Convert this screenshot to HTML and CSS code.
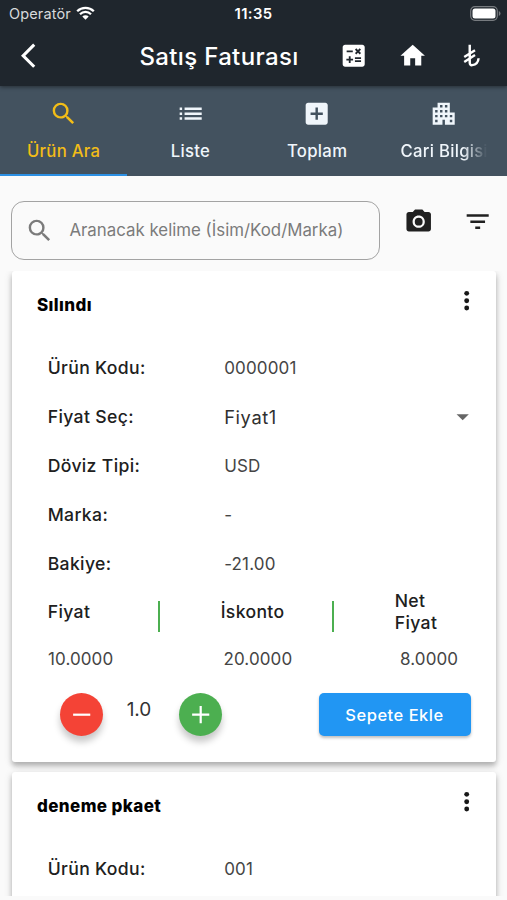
FILE: index.html
```
<!DOCTYPE html>
<html lang="tr">
<head>
<meta charset="utf-8">
<title>Satış Faturası</title>
<link rel="stylesheet" href="styles.css">
</head>
<body>
<header class="top">
  <div class="status">
    <div class="carrier"><span>Operatör</span>
      <svg class="wifi" viewBox="0 0 19 14"><path d="M1.2 5.2a11.8 11.8 0 0 1 16.6 0M4 8.2a7.8 7.8 0 0 1 11 0" fill="none" stroke="#fff" stroke-width="2.3"/><path d="M9.500 13.700 6.300 10.500a4.600 4.600 0 0 1 6.400 0z" fill="#fff"/></svg>
    </div>
    <span class="clock">11:35</span>
    <svg class="battery" viewBox="0 0 31 15"><rect x=".7" y=".7" width="26.600" height="13.600" rx="4.200" fill="none" stroke="#777b7f" stroke-width="1.200"/><rect x="2.500" y="2.500" width="23" height="10" rx="2.500" fill="#fff"/><path d="M28.800 5q1.700.7 1.700 2.500t-1.700 2.500z" fill="#777b7f"/></svg>
  </div>
  <div class="appbar">
    <svg class="icon back" viewBox="0 0 24 24"><path d="M11.670 3.870 9.900 2.100 0 12l9.900 9.900 1.770-1.770L3.540 12z"/></svg>
    <h1>Satış Faturası</h1>
    <svg class="icon" viewBox="0 0 24 24"><path d="M19 3H5c-1.100 0-2 .9-2 2v14c0 1.100.9 2 2 2h14c1.100 0 2-.9 2-2V5c0-1.100-.9-2-2-2zm-5.970 4.060L14.090 6l1.410 1.410L16.910 6l1.060 1.060-1.410 1.410 1.410 1.410-1.060 1.060-1.410-1.400-1.410 1.410-1.060-1.060 1.410-1.410-1.410-1.420zm-6.780.66h5v1.500h-5v-1.500zM11.500 16h-2v2H8v-2H6v-1.500h2v-2h1.500v2h2V16zm6.500 1.250h-5v-1.500h5v1.500zm0-2.500h-5v-1.500h5v1.500z"/></svg>
    <svg class="icon" viewBox="0 0 24 24"><path d="M10 20v-6h4v6h5v-8h3L12 3 2 12h3v8z"/></svg>
    <svg class="icon" viewBox="0 0 24 24"><path d="M10.400 3v14.500c0 1.800.8 2.400 2 2.200 3.200-.4 5-2.600 5.200-5.600M5.900 13.100l8.800-5.600M5.900 17.100l8.800-5.600" fill="none" stroke="#fff" stroke-width="2"/></svg>
  </div>
</header>
<nav class="tabs">
  <div class="tab active"><svg class="icon" viewBox="0 0 24 24"><path d="M15.500 14h-.79l-.28-.27A6.471 6.471 0 0 0 16 9.500 6.500 6.500 0 1 0 9.500 16c1.610 0 3.090-.59 4.230-1.570l.27.28v.79l5 4.990L20.490 19l-4.990-5zm-6 0C7.010 14 5 11.990 5 9.500S7.010 5 9.500 5 14 7.010 14 9.500 11.990 14 9.500 14z"/></svg><span>Ürün Ara</span></div>
  <div class="tab"><svg class="icon" viewBox="0 0 24 24"><path d="M3 13h2v-2H3v2zm0 4h2v-2H3v2zm0-8h2V7H3v2zm4 4h14v-2H7v2zm0 4h14v-2H7v2zM7 7v2h14V7H7z"/></svg><span>Liste</span></div>
  <div class="tab"><svg class="icon" viewBox="0 0 24 24"><path d="M19 3H5c-1.110 0-2 .9-2 2v14c0 1.100.89 2 2 2h14c1.100 0 2-.9 2-2V5c0-1.100-.9-2-2-2zm-2 10h-4v4h-2v-4H7v-2h4V7h2v4h4v2z"/></svg><span>Toplam</span></div>
  <div class="tab"><svg class="icon" viewBox="0 0 24 24"><path d="M17 11V3H7v4H3v14h8v-4h2v4h8V11h-4zM7 19H5v-2h2v2zm0-4H5v-2h2v2zm0-4H5V9h2v2zm4 4H9v-2h2v2zm0-4H9V9h2v2zm0-4H9V5h2v2zm4 8h-2v-2h2v2zm0-4h-2V9h2v2zm0-4h-2V5h2v2zm4 12h-2v-2h2v2zm0-4h-2v-2h2v2z"/></svg><span class="fade">Cari Bilgisi</span></div>
</nav>
<section class="search">
  <div class="field">
    <svg class="icon" viewBox="0 0 24 24"><path d="M15.500 14h-.79l-.28-.27A6.471 6.471 0 0 0 16 9.500 6.500 6.500 0 1 0 9.500 16c1.610 0 3.090-.59 4.230-1.570l.27.28v.79l5 4.990L20.490 19l-4.990-5zm-6 0C7.010 14 5 11.990 5 9.500S7.010 5 9.500 5 14 7.010 14 9.500 11.990 14 9.500 14z"/></svg>
    <span>Aranacak kelime (İsim/Kod/Marka)</span>
  </div>
  <svg class="icon camera" viewBox="0 0 24 24"><circle cx="12" cy="12" r="3.200"/><path d="M9 2 7.170 4H4c-1.100 0-2 .9-2 2v12c0 1.100.9 2 2 2h16c1.100 0 2-.9 2-2V6c0-1.100-.9-2-2-2h-3.170L15 2H9zm3 15c-2.760 0-5-2.240-5-5s2.240-5 5-5 5 2.240 5 5-2.240 5-5 5z"/></svg>
  <svg class="icon filter" viewBox="0 0 24 24"><path d="M10 18h4v-2h-4v2zM3 6v2h18V6H3zm3 7h12v-2H6v2z"/></svg>
</section>
<main class="list">
  <article class="card">
    <div class="head"><h2>Sılındı</h2><svg class="icon" viewBox="0 0 24 24"><circle cx="12" cy="6" r="2"/><circle cx="12" cy="12" r="2"/><circle cx="12" cy="18" r="2"/></svg></div>
    <dl class="rows">
      <div class="row"><dt>Ürün Kodu:</dt><dd>0000001</dd></div>
      <div class="row select"><dt>Fiyat Seç:</dt><dd>Fiyat1</dd><svg class="icon" viewBox="0 0 24 24"><path d="m7 10 5 5 5-5z"/></svg></div>
      <div class="row"><dt>Döviz Tipi:</dt><dd>USD</dd></div>
      <div class="row"><dt>Marka:</dt><dd>-</dd></div>
      <div class="row"><dt>Bakiye:</dt><dd>-21.00</dd></div>
    </dl>
    <div class="prices">
      <span class="label">Fiyat</span><i class="bar"></i><span class="label">İskonto</span><i class="bar"></i><span class="label net">Net<br>Fiyat</span>
    </div>
    <div class="amounts"><span>10.0000</span><span>20.0000</span><span>8.0000</span></div>
    <div class="actions">
      <button class="round minus"><svg viewBox="0 0 24 24"><path d="M5 12h14"/></svg></button>
      <span class="qty">1.0</span>
      <button class="round plus"><svg viewBox="0 0 24 24"><path d="M5 12h14M12 5v14"/></svg></button>
      <button class="add">Sepete Ekle</button>
    </div>
  </article>
  <article class="card">
    <div class="head"><h2>deneme pkaet</h2><svg class="icon" viewBox="0 0 24 24"><circle cx="12" cy="6" r="2"/><circle cx="12" cy="12" r="2"/><circle cx="12" cy="18" r="2"/></svg></div>
    <dl class="rows"><div class="row"><dt>Ürün Kodu:</dt><dd>001</dd></div></dl>
  </article>
</main>
</body>
</html>
```
FILE: styles.css
```
* { box-sizing: border-box; margin: 0; padding: 0; }
body { height: 900px; overflow: hidden; display: flex; flex-direction: column; background: #fafafa; color: #202020; font-family: Inter, "Liberation Sans", sans-serif; font-size: 17px; }
.icon { width: 29.4px; height: 29.4px; flex: none; fill: currentColor; display: block; }
.top { height: 86px; flex: none; background: #1f262d; color: #fff; position: relative; box-shadow: 0 1px 4px rgba(0,0,0,.45); }
.status { height: 28px; padding: 0 6px 0 9px; display: grid; grid-template-columns: 1fr auto 1fr; align-items: center; }
.carrier { display: flex; align-items: center; gap: 5px; margin-top: -1px; font-size: 14.500px; color: #d8dadc; }
.carrier span { letter-spacing: .15px; }
.wifi { width: 19px; height: 14px; margin-top: -1px; }
.clock { font-size: 14.800px; font-weight: 600; letter-spacing: .4px; margin-right: 3px; }
.battery { width: 31px; height: 15px; margin-top: -2px; justify-self: end; }
.appbar { height: 56px; display: flex; align-items: center; padding: 0 20.700px 0 20.500px; }
.appbar .icon { margin-right: 29.400px; }
.appbar .icon:last-child { margin-right: 0; }
.appbar .back { margin-right: 0; }
h1 { width: 270px; margin-right: auto; padding-left: 89.500px; font-size: 24px; font-weight: 500; letter-spacing: .35px; white-space: nowrap; }
.tabs { height: 90px; flex: none; background: #43525f; color: #f0f6fb; display: grid; grid-template-columns: repeat(4, 1fr); font-size: 16.700px; font-weight: 500; letter-spacing: .3px; }
.tab { padding: 13px 19px 0 19.500px; display: flex; flex-direction: column; align-items: center; gap: 13px; border-bottom: 2px solid transparent; line-height: 21px; }
.active { color: #f3bd17; border-color: #2c90e4; }
.fade { width: 87px; overflow: hidden; white-space: nowrap; -webkit-mask-image: linear-gradient(90deg, #000 72%, transparent 100%); mask-image: linear-gradient(90deg, #000 72%, transparent 100%); }
.search { height: 95px; flex: none; display: flex; align-items: flex-start; padding: 25px 14px 0 11px; color: #202020; }
.field { width: 369px; height: 59px; border: 1px solid #a3a3a3; border-radius: 13px; display: flex; align-items: center; padding-left: 13px; gap: 15px; color: #7b7b7b; font-size: 16.850px; white-space: nowrap; }
.field span { padding-bottom: 1px; }
.camera { margin: 5.500px 29px 0 24px; }
.filter { margin: 6px 0 0 .5px; }
.list { height: 625px; padding: 0 11px 0 12px; overflow: hidden; display: flex; flex-direction: column; gap: 10px; }
.card { flex: none; height: 491px; padding: 15px 15px 0 25px; background: #fff; border-radius: 3px; box-shadow: 0 4px 5px rgba(0,0,0,.22), 0 2px 9px rgba(0,0,0,.14); }
.head { height: 30px; display: flex; align-items: flex-start; justify-content: space-between; color: #181818; }
h2 { padding-top: 8px; font-size: 17px; line-height: 22px; font-weight: 800; letter-spacing: .4px; color: #000; }
.rows { padding: 27px 0 0 10.700px; }
.row { height: 49.100px; display: flex; align-items: center; }
dt { width: 176.500px; font-size: 17.600px; font-weight: 500; letter-spacing: .35px; }
dd { flex: 1; color: #454545; letter-spacing: .15px; }
.select dd { color: #303030; font-size: 18.300px; letter-spacing: .6px; }
.select .icon { margin-right: 4px; color: #666; }
.prices { height: 46px; padding: 1px 0 0 10.700px; display: grid; grid-template-columns: 110px 63px 111px 63px 1fr; align-items: center; font-size: 17.600px; font-weight: 500; letter-spacing: .35px; }
.bar { width: 2.500px; height: 31px; margin-top: 10px; background: #4caf50; }
.net { padding-top: 1px; line-height: 22px; }
.amounts { height: 48px; padding: 1px 0 0 11px; display: grid; grid-template-columns: 175.500px 176.500px 1fr; align-items: center; color: #454545; letter-spacing: .1px; }
.actions { height: 43px; margin-top: 11px; padding: 0 10.500px 0 23px; display: flex; align-items: center; }
button { border: 0; font: inherit; color: #fff; }
.round { width: 43px; height: 43px; border-radius: 50%; display: grid; place-items: center; box-shadow: 0 6px 7px rgba(0,0,0,.22); }
.round svg { width: 29.400px; fill: none; stroke: #fff; stroke-width: 1.800; }
.minus { background: #f44336; }
.plus { background: #4caf50; }
.qty { width: 76px; padding: 0 4px 10px 0; text-align: center; font-size: 19px; color: #333; }
.add { width: 152px; height: 43px; margin-left: auto; border-radius: 5px; background: #2196f3; font-size: 16.500px; font-weight: 500; letter-spacing: .5px; box-shadow: 0 2px 3px rgba(0,0,0,.25); }
```
